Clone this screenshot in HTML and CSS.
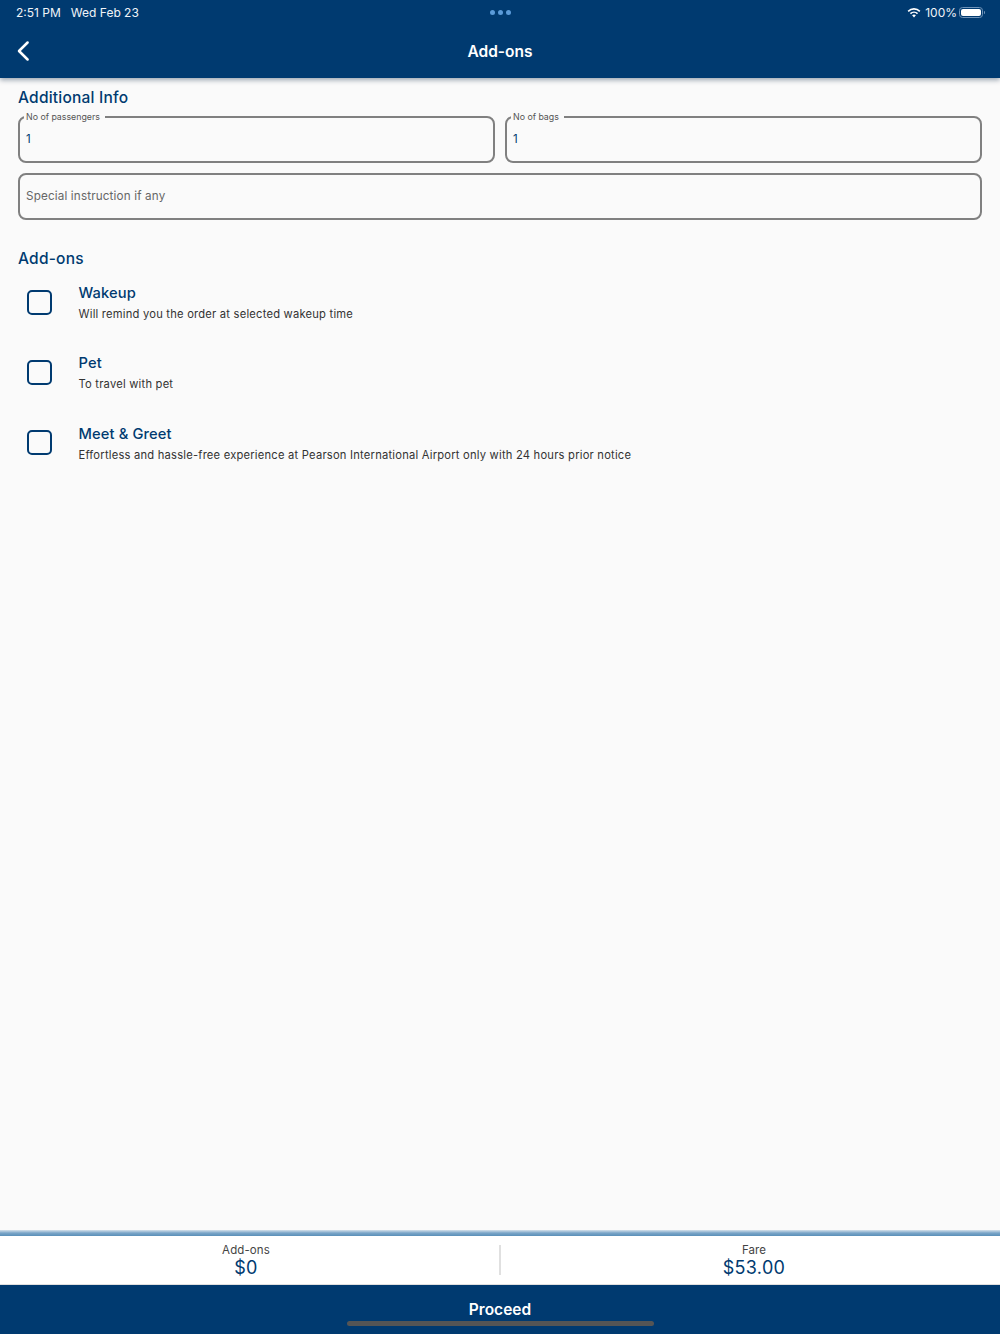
FILE: index.html
```html
<!DOCTYPE html>
<html lang="en">
<head>
<meta charset="utf-8">
<title>Add-ons</title>
<link rel="stylesheet" href="styles.css">
</head>
<body>
<div class="page">
  <header class="appbar">
    <div class="status">
      <div class="status-left"><span>2:51 PM</span><span>Wed Feb 23</span></div>
      <div class="dots"><i></i><i></i><i></i></div>
      <div class="status-right">
        <svg class="wifi" width="14" height="11" viewBox="0 0 14 11"><path d="M0.6 3.7a9.2 9.2 0 0 1 12.8 0l-1.1 1.2a7.6 7.6 0 0 0-10.6 0z" fill="#fff"/><path d="M2.9 6a6 6 0 0 1 8.2 0l-1.1 1.2a4.4 4.4 0 0 0-6 0z" fill="#fff"/><path d="M5.1 8.3a2.9 2.9 0 0 1 3.8 0L7 10.4z" fill="#fff"/></svg>
        <span>100%</span>
        <span class="battery"><b></b></span>
      </div>
    </div>
    <div class="titlebar">
      <svg class="back" width="14" height="22" viewBox="0 0 14 22"><path d="M11.6 2.5 3 11l8.6 8.500" fill="none" stroke="#fff" stroke-width="2.500" stroke-linecap="round" stroke-linejoin="round"/></svg>
      <h1>Add-ons</h1>
    </div>
  </header>

  <main class="content">
    <h2 class="section first">Additional Info</h2>
    <div class="row">
      <fieldset class="field"><legend>No of passengers</legend><span class="value">1</span></fieldset>
      <fieldset class="field"><legend>No of bags</legend><span class="value">1</span></fieldset>
    </div>
    <div class="field plain"><span class="placeholder">Special instruction if any</span></div>

    <h2 class="section second">Add-ons</h2>
    <ul class="addons">
      <li class="addon">
        <span class="check"></span>
        <div><h3>Wakeup</h3><p>Will remind you the order at selected wakeup time</p></div>
      </li>
      <li class="addon">
        <span class="check"></span>
        <div><h3>Pet</h3><p>To travel with pet</p></div>
      </li>
      <li class="addon">
        <span class="check"></span>
        <div><h3>Meet &amp; Greet</h3><p>Effortless and hassle-free experience at Pearson International Airport only with 24 hours prior notice</p></div>
      </li>
    </ul>
  </main>

  <div class="fade"></div>
  <section class="summary">
    <div class="cell"><span class="label">Add-ons</span><span class="amount">$0</span></div>
    <div class="divider"></div>
    <div class="cell"><span class="label">Fare</span><span class="amount">$53.00</span></div>
  </section>
  <footer class="proceed">
    <span>Proceed</span>
    <div class="home"></div>
  </footer>
</div>
</body>
</html>
```

FILE: styles.css
```css
* { box-sizing: border-box; }
html, body { margin: 0; padding: 0; }
body { font-family: Inter, "Liberation Sans", sans-serif; background: #fafafa; }
.page { width: 1000px; height: 1334px; display: flex; flex-direction: column; overflow: hidden; }

.appbar { height: 78px; background: #003a70; color: #fff; box-shadow: 0 2px 5px rgba(0, 30, 60, .4); position: relative; flex: none; }
.status { height: 24px; padding: 0 17px 0 16px; display: flex; align-items: center; justify-content: space-between; font-size: 12px; position: relative; color: #f0f4f8; }
.status-left { display: flex; gap: 10px; }
.dots { position: absolute; left: 490px; top: 10px; display: flex; gap: 3px; }
.dots i { width: 5px; height: 5px; border-radius: 50%; background: #5b9bd9; }
.status-right { display: flex; align-items: center; gap: 4px; }
.battery { width: 24px; height: 11px; margin-left: -2px; border: 1px solid #6f93b8; border-radius: 3.5px; padding: 1px; position: relative; display: block; }
.battery b { display: block; height: 100%; background: #fff; border-radius: 2px; }
.battery::after { content: ""; position: absolute; right: -3px; top: 3px; width: 1.500px; height: 3px; background: #6f93b8; border-radius: 0 1px 1px 0; }
.titlebar { height: 54px; position: relative; display: flex; align-items: center; justify-content: center; }
.titlebar h1 { margin: 0; font-size: 15.500px; font-weight: 600; }
.back { position: absolute; left: 16px; top: 16px; }

.content { flex: 1; padding: 0 18px; }
.section { margin: 0; color: #003a70; font-size: 15.500px; font-weight: 500; line-height: 20px; letter-spacing: .22px; }
.section.first { margin-top: 10px; }
.section.second { margin-top: 29px; }
.row { display: flex; gap: 10px; margin-top: 3px; }
.field { flex: 1; min-width: 0; height: 52px; margin: 0; padding: 0 6px; border: 2px solid #808080; border-radius: 8px; display: flex; align-items: center; }
fieldset.field { display: block; height: 52px; margin-top: -0.500px; padding: 0 4px; }
.field legend { padding: 0 5px 0 2px; margin: 0; font-size: 8.800px; line-height: 12px; color: #555; }
.value { display: block; font-size: 11.500px; line-height: 14px; color: #003a70; margin: 9px 0 0 2px; }
.plain { height: 47px; margin-top: 10px; }
.placeholder { font-size: 11.700px; letter-spacing: .15px; color: #666; }

.addons { list-style: none; margin: 14.500px 0 0; padding: 0; }
.addon { height: 70.300px; display: flex; align-items: flex-start; gap: 26.500px; padding-left: 9px; }
.check { width: 25px; height: 25px; margin-top: 6.500px; border: 2px solid #003a70; border-radius: 5px; flex: none; }
.addon h3 { margin: 0; font-size: 14.700px; font-weight: 500; line-height: 20px; color: #003a70; letter-spacing: .12px; }
.addon p { margin: 1px 0 0; font-size: 11.200px; line-height: 20px; letter-spacing: .21px; color: #333; }

.fade { height: 6px; flex: none; background: linear-gradient(#d5e0ea, #7aa5c8 50%, #5a8fb8); }
.summary { height: 49px; flex: none; background: #fff; display: flex; align-items: center; border-bottom: 1px solid #e0e0e0; }
.cell { flex: 1; display: flex; flex-direction: column; align-items: center; }
.label { font-size: 11.500px; line-height: 14px; letter-spacing: .1px; color: #444; }
.amount { font-size: 18px; line-height: 21px; color: #003a70; letter-spacing: .3px; }
.divider { width: 2px; height: 30px; margin: 0 7px; background: #e0e0e0; flex: none; }

.proceed { height: 49px; flex: none; background: #003a70; color: #fff; position: relative; display: flex; justify-content: center; padding-top: 15px; font-size: 15.500px; font-weight: 600; line-height: 20px; }
.home { position: absolute; left: 347px; top: 36px; width: 307px; height: 5px; border-radius: 3px; background: #555; }
```
